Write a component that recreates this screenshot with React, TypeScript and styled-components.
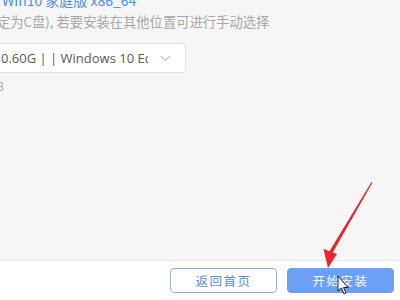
import React from "react";
import styled, { createGlobalStyle } from "styled-components";

const Global = createGlobalStyle`
  html, body { margin: 0; padding: 0; width: 400px; height: 300px; overflow: hidden; }
  body { font-family: "Open Sans", "Noto Sans CJK SC", sans-serif; background: #f6f6f6; }
`;

const Page = styled.div`
  position: relative;
  width: 400px;
  height: 300px;
  display: flex;
  flex-direction: column;
  overflow: hidden;
`;

const Main = styled.main`
  flex: 1;
  background: #f6f6f6;
  overflow: hidden;
`;

const Content = styled.div`
  display: flex;
  flex-direction: column;
  align-items: flex-start;
  margin: -9px 0 0 -3px;
`;

const Title = styled.div`
  font-family: "Noto Sans CJK SC", "Open Sans", sans-serif;
  font-size: 14px;
  line-height: 18px;
  color: #4a93e6;
  padding-left: 5px;
  white-space: nowrap;
`;

const Hint = styled.div`
  font-family: "Noto Sans CJK SC", sans-serif;
  font-size: 13.3px;
  line-height: 18px;
  color: #a8a8a8;
  margin-top: 4px;
  white-space: nowrap;
`;

const Select = styled.div`
  margin: 12px 0 0 -30px;
  width: 219px;
  height: 30px;
  box-sizing: border-box;
  background: #fff;
  border: 1px solid #e2e2e2;
  border-radius: 3px;
  display: flex;
  align-items: center;
  padding: 0 14px 0 33px;
  gap: 12px;
`;

const SelectText = styled.span`
  flex: 1;
  overflow: hidden;
  white-space: nowrap;
  font-family: "Open Sans", "Noto Sans CJK SC", sans-serif;
  font-size: 13px;
  color: #5a5a5a;
`;

const Note = styled.div`
  font-family: "Noto Sans CJK SC", sans-serif;
  font-size: 12px;
  line-height: 14px;
  color: #aaa;
  margin: 6px 0 0 -1px;
  white-space: nowrap;
`;

const Footer = styled.footer`
  height: 40px;
  flex: none;
  box-sizing: border-box;
  background: #fff;
  border-top: 1px solid #ececec;
  display: flex;
  justify-content: flex-end;
  align-items: center;
  gap: 10px;
  padding: 0 6px 1px 0;
`;

const Button = styled.button<{ $primary?: boolean }>`
  width: 107px;
  height: 25px;
  box-sizing: border-box;
  border-radius: 4px;
  font-family: "Noto Sans CJK SC", sans-serif;
  font-size: 12.5px;
  letter-spacing: 1.5px;
  padding: 0;
  cursor: pointer;
  border: 1px solid ${(p) => (p.$primary ? "#6c9ff6" : "#8fb2ea")};
  background: ${(p) => (p.$primary ? "#6c9ff6" : "#fff")};
  color: ${(p) => (p.$primary ? "#f4f8ff" : "#5b8fde")};
`;

const Overlay = styled.svg`
  position: absolute;
  left: 0;
  top: 0;
  pointer-events: none;
`;

export default function App() {
  return (
    <>
      <Global />
      <Page>
        <Main>
          <Content>
            <Title>Win10 家庭版 x86_64</Title>
            <Hint>定为C盘), 若要安装在其他位置可进行手动选择</Hint>
            <Select>
              <SelectText>0.60G | | Windows 10 Education</SelectText>
              <svg width="11" height="7" viewBox="0 0 11 7">
                <path d="M1 1 L5.5 5.5 L10 1" fill="none" stroke="#c4c4c4" strokeWidth="1.2" />
              </svg>
            </Select>
            <Note>B</Note>
          </Content>
        </Main>
        <Footer>
          <Button>返回首页</Button>
          <Button $primary>开始安装</Button>
        </Footer>
        <Overlay width="400" height="300" viewBox="0 0 400 300">
          <polygon points="371.5,182 372.5,182.4 332.5,253 329,252" fill="#e8252a" />
          <polygon points="328,268 323.5,249 337,254" fill="#e8252a" />
          <path
            d="M338 276 L338 291 L341.5 288 L344 294 L346 293 L343.5 287.5 L348 287.5 Z"
            fill="#fff"
            stroke="#222"
            strokeWidth="1"
            strokeLinejoin="round"
          />
        </Overlay>
      </Page>
    </>
  );
}
